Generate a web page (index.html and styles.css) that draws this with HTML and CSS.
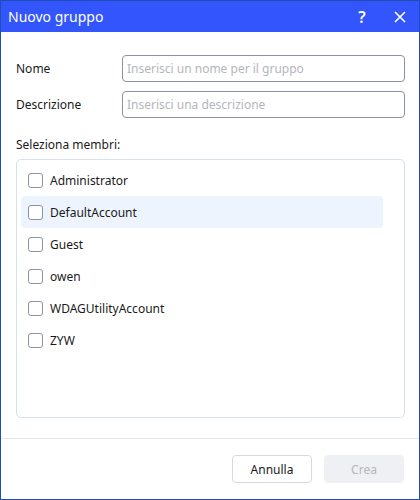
FILE: index.html
```html
<!DOCTYPE html>
<html lang="it">
<head>
<meta charset="utf-8">
<title>Nuovo gruppo</title>
<link rel="stylesheet" href="styles.css">
</head>
<body>
<div class="window">
  <div class="titlebar">
    <span class="title">Nuovo gruppo</span>
    <div class="tb-actions">
      <span class="tb-btn help">?</span>
      <span class="tb-btn close">
        <svg width="12" height="12" viewBox="0 0 12 12"><path d="M1 1L11 11M11 1L1 11" stroke="#fff" stroke-width="1.7" fill="none"/></svg>
      </span>
    </div>
  </div>
  <div class="content">
    <div class="field">
      <label class="label">Nome</label>
      <input class="input" type="text" placeholder="Inserisci un nome per il gruppo">
    </div>
    <div class="field">
      <label class="label">Descrizione</label>
      <input class="input" type="text" placeholder="Inserisci una descrizione">
    </div>
    <div class="section-label">Seleziona membri:</div>
    <div class="members">
      <div class="member"><span class="check"></span><span>Administrator</span></div>
      <div class="member hover"><span class="check"></span><span>DefaultAccount</span></div>
      <div class="member"><span class="check"></span><span>Guest</span></div>
      <div class="member"><span class="check"></span><span>owen</span></div>
      <div class="member"><span class="check"></span><span>WDAGUtilityAccount</span></div>
      <div class="member"><span class="check"></span><span>ZYW</span></div>
    </div>
  </div>
  <div class="footer">
    <button class="btn">Annulla</button>
    <button class="btn disabled">Crea</button>
  </div>
</div>
</body>
</html>
```
FILE: styles.css
```css
* { box-sizing: border-box; }
html, body { margin: 0; padding: 0; }
body {
  width: 420px;
  height: 500px;
  font-family: "Noto Sans", "DejaVu Sans", sans-serif;
  font-size: 12px;
  color: #1a1a1a;
  background: #fff;
}
.window {
  width: 420px;
  height: 500px;
  border: 1px solid #1f4fae;
  display: flex;
  flex-direction: column;
  background: #fff;
}
.titlebar {
  height: 31px;
  background: #3355fe;
  color: #fff;
  display: flex;
  align-items: center;
  justify-content: space-between;
  padding-left: 7px;
  flex-shrink: 0;
}
.title { font-size: 14px; }
.tb-actions { display: flex; align-items: center; height: 100%; }
.tb-btn {
  width: 38px;
  height: 100%;
  display: flex;
  align-items: center;
  justify-content: center;
}
.help { font-size: 16px; font-weight: 600; }
.content {
  flex: 1;
  padding: 23px 14px 0 15px;
  display: flex;
  flex-direction: column;
}
.field {
  display: flex;
  align-items: center;
  height: 27px;
  margin-bottom: 9px;
}
.label { width: 106px; flex-shrink: 0; }
.input {
  flex: 1;
  height: 27px;
  border: 1px solid #8b93a3;
  border-radius: 4px;
  padding: 0 4px;
  font-family: inherit;
  font-size: 12px;
  color: #222;
  outline: none;
}
.input::placeholder { color: #b3b6bd; }
.section-label { margin-top: 9px; margin-bottom: 6px; }
.members {
  height: 259px;
  border: 1px solid #d7e0f0;
  border-radius: 5px;
  padding: 4px 21px 0 4px;
  display: flex;
  flex-direction: column;
}
.member {
  height: 32px;
  display: flex;
  align-items: center;
  padding-left: 7px;
  border-radius: 4px;
}
.member.hover { background: #eef4fd; }
.check {
  width: 15px;
  height: 15px;
  border: 1px solid #8b93a3;
  border-radius: 3px;
  margin-right: 7px;
  background: #fff;
}
.footer {
  border-top: 1px solid #e3e5ec;
  height: 61px;
  margin-top: 18px;
  display: flex;
  align-items: flex-start;
  justify-content: flex-end;
  gap: 12px;
  padding: 16px 15px 0 0;
}
.btn {
  width: 80px;
  height: 28px;
  border: 1px solid #d5d9e2;
  background: #fff;
  border-radius: 4px;
  font-family: inherit;
  font-size: 12px;
  color: #1a1a1a;
}
.btn.disabled {
  background: #eef0f3;
  border-color: #eef0f3;
  color: #b3b6bd;
}
```
